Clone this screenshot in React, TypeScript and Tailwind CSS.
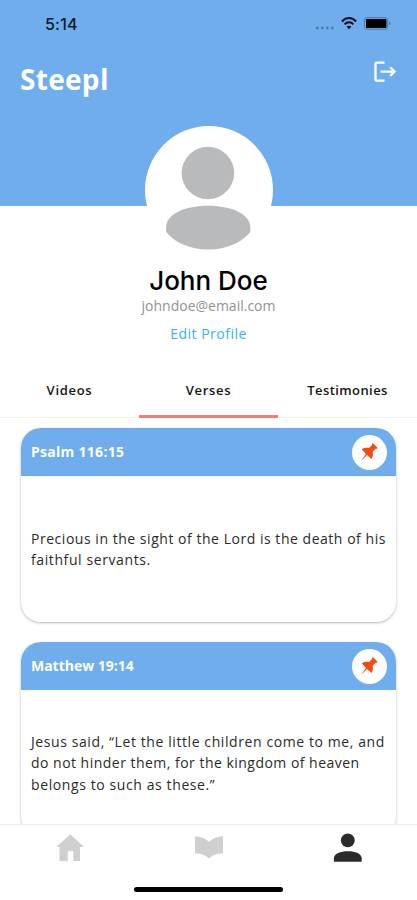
import { ReactNode } from "react";
import clsx from "clsx";

interface Verse {
  reference: string;
  lines: { text: string; className: string }[];
  titleClassName: string;
}

const verses: Verse[] = [
  {
    reference: "Psalm 116:15",
    titleClassName: "tracking-[0.28px]",
    lines: [
      { text: "Precious in the sight of the Lord is the death of his", className: "tracking-[0.53px]" },
      { text: "faithful servants.", className: "tracking-[0.6px]" },
    ],
  },
  {
    reference: "Matthew 19:14",
    titleClassName: "tracking-[-0.02px]",
    lines: [
      { text: "Jesus said, “Let the little children come to me, and", className: "tracking-[0.59px]" },
      { text: "do not hinder them, for the kingdom of heaven", className: "tracking-[0.48px]" },
      { text: "belongs to such as these.”", className: "tracking-[0.6px]" },
    ],
  },
];

const tabs = [
  { label: "Videos", className: "tracking-[0.7px]" },
  { label: "Verses", className: "tracking-[0.7px]" },
  { label: "Testimonies", className: "tracking-[0.42px]" },
];

const StatusBar = () => (
  <div className="flex h-[47px] items-center justify-between pl-[45px] pr-[26px]">
    <span className="font-['Inter',sans-serif] text-[16px] font-medium leading-none tracking-[0.2px] text-[#0c1a2a]">5:14</span>
    <div className="flex items-center">
      <svg width="20" height="6" viewBox="0 0 20 6" className="mt-[9px]" fill="#4d7dad">
        <circle cx="2.3" cy="3" r="1.4" />
        <circle cx="7.3" cy="3" r="1.4" />
        <circle cx="12.3" cy="3" r="1.4" />
        <circle cx="17.3" cy="3" r="1.4" />
      </svg>
      <svg width="16" height="13" viewBox="0 0 16 13" className="ml-[6px]" fill="none" stroke="#08121e">
        <path d="M.9 4.5C5-.1 11-.1 15.1 4.5" strokeWidth="2.1" />
        <path d="M3.6 7.4c2.5-2.8 6.3-2.8 8.8 0" strokeWidth="2" />
        <path d="M5.7 9.7 8 12.3l2.3-2.6c-1.3-1.2-3.3-1.2-4.6 0Z" fill="#08121e" stroke="none" />
      </svg>
      <svg width="27" height="13" viewBox="0 0 27 13" className="ml-[7px]">
        <rect x=".6" y=".6" width="23" height="11.6" rx="2.6" fill="none" stroke="#4779ad" />
        <rect x="2" y="2" width="20.4" height="8.9" rx="1" fill="#000" />
        <path d="M25 4.2c1.8.8 1.8 3.7 0 4.5Z" fill="#4779ad" />
      </svg>
    </div>
  </div>
);

const LogoutIcon = () => (
  <svg width="24" height="22" viewBox="0 0 24 22" fill="none" stroke="#fff" strokeWidth="2.3">
    <path d="M11.500 1.600H4.200A1.700 1.700 0 0 0 2.500 3.300v14.600a1.700 1.700 0 0 0 1.700 1.700h7.300" strokeLinejoin="round" />
    <path d="M7.500 10.600h14M17.200 6.300l4.400 4.300-4.400 4.300" />
  </svg>
);

const PinIcon = () => (
  <svg width="20" height="20" viewBox="0 0 20 20" fill="#f04b12">
    <path d="M12.900 1.200 17.500 5.700c-.1.900-.9 1.300-1.900 1l-3 3.200c.6 2.300.3 4.800-1.100 7.100L7 12.900.9 19.300l5-7.400L1.800 7.300c2.300-1.500 4.900-1.800 7.200-1.300l3.100-2.900c-.3-.9 0-1.700.8-1.900Z" />
  </svg>
);

const VerseCard = ({ verse }: { verse: Verse }) => (
  <article className="h-[194px] shrink-0 overflow-hidden rounded-[20px] bg-white shadow-[0_1px_3px_rgba(0,0,0,0.28)]">
    <div className="flex h-12 items-center justify-between bg-[#6fadec] pl-[10px] pr-[9px]">
      <h2 className={clsx("text-[14px] font-bold leading-5 text-white", verse.titleClassName)}>{verse.reference}</h2>
      <div className="flex size-[35px] items-center justify-center rounded-full bg-white">
        <PinIcon />
      </div>
    </div>
    <div className="flex h-[146px] flex-col justify-center pl-[10px] text-[14px] leading-[21.3px] text-[#2b2b2b]">
      {verse.lines.map((line) => (
        <p key={line.text} className={clsx("whitespace-nowrap", line.className)}>{line.text}</p>
      ))}
    </div>
  </article>
);

const NavButton = ({ label, children }: { label: string; children: ReactNode }) => (
  <button aria-label={label} className="flex flex-1 justify-center">
    {children}
  </button>
);

const BottomNav = () => (
  <nav className="flex h-[76px] shrink-0 flex-col items-center border-t border-[#ececec] bg-white">
    <div className="flex w-full pt-[8px]">
      <NavButton label="Home">
        <svg width="30" height="30" viewBox="0 0 30 30" fill="#d0d0d0">
          <path d="M15.300 1.300 29 14h-4v14h-6.700v-9q0-1-1-1h-3.500q-1 0-1 1v9H4.500V14H1.300Z" />
        </svg>
      </NavButton>
      <NavButton label="Verses">
        <svg width="30" height="30" viewBox="0 0 30 30" fill="#d0d0d0">
          <path d="M1 3.200c5.600.2 10.300 2 14 5.500 3.700-3.500 8.400-5.300 14-5.500v17c-5.600.2-10.300 1.700-14 5.200-3.700-3.500-8.400-5-14-5.200Z" />
        </svg>
      </NavButton>
      <NavButton label="Profile">
        <svg width="30" height="30" viewBox="0 0 30 30" fill="#2b2b2b">
          <circle cx="14.800" cy="7.400" r="6.900" />
          <path d="M.9 28.700v-3.500c0-4.600 6.400-7 13.900-7s13.900 2.400 13.900 7v3.500Z" />
        </svg>
      </NavButton>
    </div>
    <div className="mt-[24px] h-[5px] w-[149px] rounded-full bg-black" />
  </nav>
);

export default function App() {
  return (
    <div className="flex h-[900px] w-[417px] flex-col overflow-hidden bg-white font-['Open_Sans',sans-serif]">
      <header className="h-[206px] shrink-0 bg-[#6fadec]">
        <StatusBar />
        <div className="flex items-start justify-between pl-5 pr-[20px] pt-[14px]">
          <h1 className="text-[28px] font-bold leading-9 tracking-[0.3px] text-white">Steepl</h1>
          <LogoutIcon />
        </div>
      </header>

      <section className="-mt-20 flex h-[248px] shrink-0 flex-col items-center">
        <div className="size-32 shrink-0 rounded-full bg-white">
          <svg width="128" height="128" viewBox="0 0 128 128" fill="#b8babb">
            <circle cx="62.900" cy="47" r="26.300" />
            <path d="M21.100 101.500C21.100 89 38 79.800 63.200 79.800s42.100 9.200 42.100 21.700v4.500c-8 10-23 17.500-42.100 17.500S29.100 116 21.100 106Z" />
          </svg>
        </div>
        <p className="mt-[11px] font-['Inter',sans-serif] text-[26px] font-medium leading-8 text-black">John Doe</p>
        <p className="text-[14px] leading-[18px] text-[#929292]">johndoe@email.com</p>
        <p className="mt-[9px] text-[14px] leading-5 tracking-[0.5px] text-[#38b1f5]">Edit Profile</p>
      </section>

      <div className="flex h-[44px] shrink-0 border-b border-[#f1f1f1]">
        {tabs.map((tab) => (
          <button
            key={tab.label}
            className={clsx(
              "-mb-px flex flex-1 items-start justify-center pt-[6px] text-[13px] font-semibold leading-5 text-[#151515]",
              tab.label === "Verses" && "border-b-[3px] border-[#ed8078]"
            )}
          >
            <span className={tab.className}>{tab.label}</span>
          </button>
        ))}
      </div>

      <main className="flex min-h-0 flex-1 flex-col gap-5 overflow-hidden px-[21px] pt-[10px]">
        {verses.map((verse) => (
          <VerseCard key={verse.reference} verse={verse} />
        ))}
      </main>

      <BottomNav />
    </div>
  );
}
